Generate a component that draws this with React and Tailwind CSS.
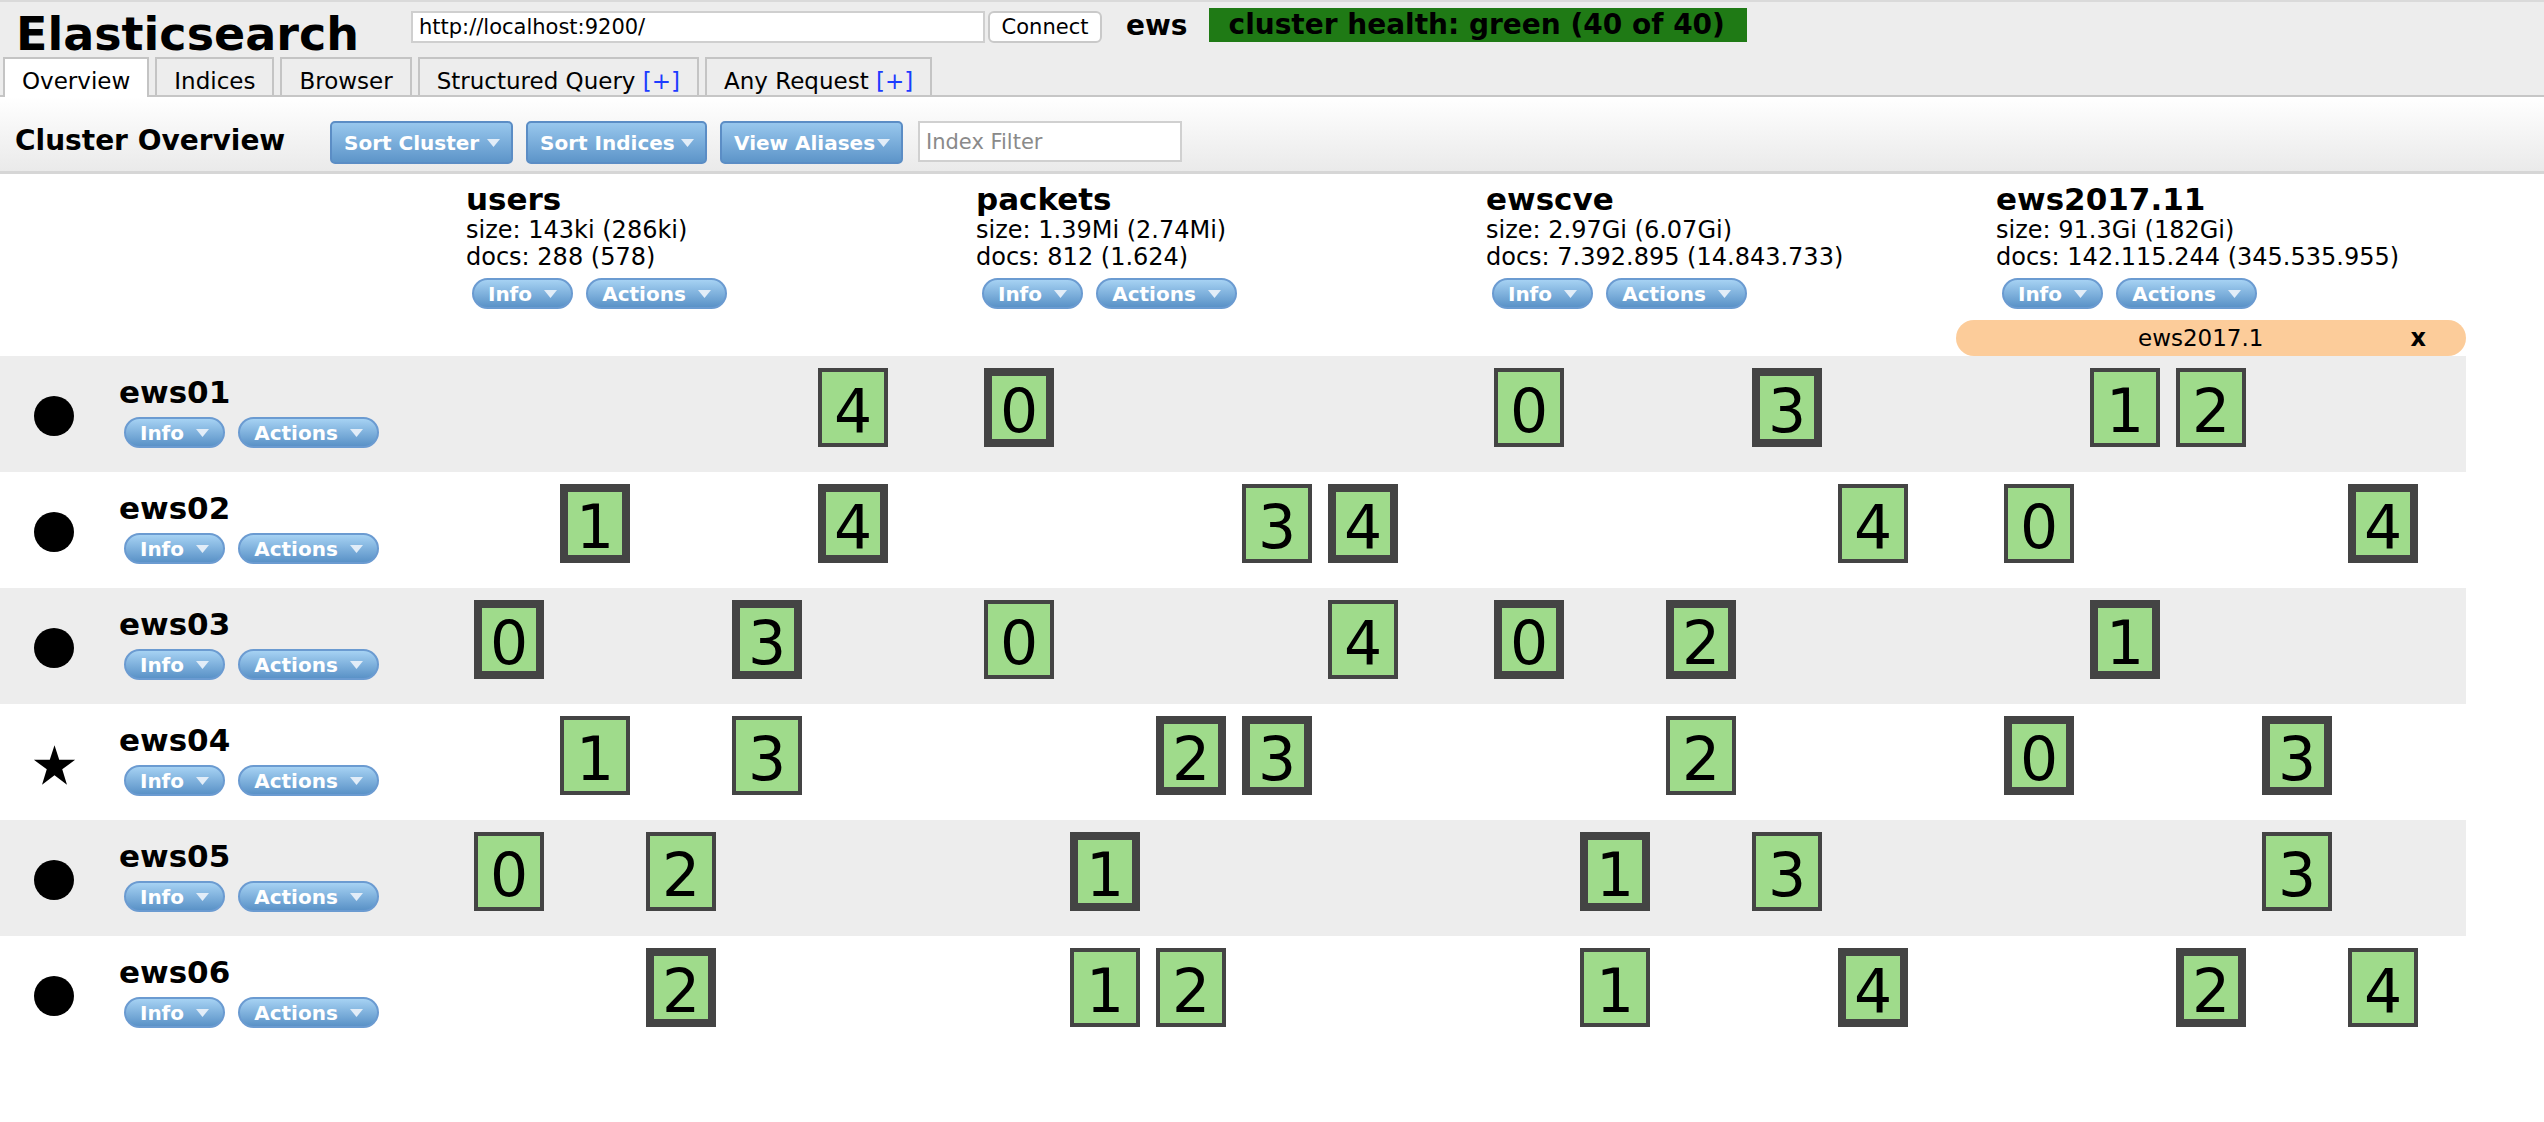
import React from "react";

const indices = [
  { name: "users", size: "143ki (286ki)", docs: "288 (578)" },
  { name: "packets", size: "1.39Mi (2.74Mi)", docs: "812 (1.624)" },
  { name: "ewscve", size: "2.97Gi (6.07Gi)", docs: "7.392.895 (14.843.733)" },
  { name: "ews2017.11", size: "91.3Gi (182Gi)", docs: "142.115.244 (345.535.955)" },
];

// per node, per index: [shard number, primary]
const nodes = [
  { name: "ews01", shards: [[[4, false]], [[0, true]], [[0, false], [3, true]], [[1, false], [2, false]]] },
  { name: "ews02", shards: [[[1, true], [4, true]], [[3, false], [4, true]], [[4, false]], [[0, false], [4, true]]] },
  { name: "ews03", shards: [[[0, true], [3, true]], [[0, false], [4, false]], [[0, true], [2, true]], [[1, true]]] },
  { name: "ews04", master: true, shards: [[[1, false], [3, false]], [[2, true], [3, true]], [[2, false]], [[0, true], [3, true]]] },
  { name: "ews05", shards: [[[0, false], [2, false]], [[1, true]], [[1, true], [3, false]], [[3, false]]] },
  { name: "ews06", shards: [[[2, true]], [[1, false], [2, false]], [[1, false], [4, true]], [[2, true], [4, false]]] },
];

const Caret = () => (
  <svg width="13" height="8" viewBox="0 0 13 8" className="shrink-0">
    <path d="M0 0h13L6.5 8z" fill="#e2edf8" />
  </svg>
);

const Pill = ({ label, width }) => (
  <button
    className={`flex items-center justify-center gap-[12px] h-[31px] rounded-full border-2 border-[#6b9bd1] bg-gradient-to-b from-[#a6d2f3] to-[#5a92c7] text-white font-bold text-[20px] leading-none whitespace-nowrap ${width}`}
  >
    <span>{label}</span>
    <Caret />
  </button>
);

const ToolButton = ({ label, width }) => (
  <button
    className={`flex items-center justify-between pl-[12px] pr-[11px] h-[43px] rounded-[5px] border-2 border-[#5b8dc5] bg-gradient-to-b from-[#98c7ed] to-[#5d95c9] text-white font-bold text-[20px] leading-none whitespace-nowrap ${width}`}
  >
    <span>{label}</span>
    <Caret />
  </button>
);

const Shard = ({ n, primary }) => (
  <div
    className={`w-[70px] h-[79px] pt-[6px] flex items-center justify-center bg-[#9fdb8b] border-[#444] text-black text-[60px] leading-none ${
      primary ? "border-[8px]" : "border-4"
    }`}
  >
    {n}
  </div>
);

const Star = () => (
  <svg width="43" height="42" viewBox="0 0 100 96">
    <polygon points="50,2 61,36 98,36 68,58 79,94 50,72 21,94 32,58 2,36 39,36" fill="#000" />
  </svg>
);

export default function App() {
  return (
    <div className="min-h-screen bg-white text-black font-['DejaVu_Sans',Verdana,sans-serif]">
      {/* Header */}
      <div className="bg-[#ededed] border-t-2 border-[#dadada]">
        <div className="flex items-start h-[55px]">
          <div className="w-[411px] pl-[16px] pt-[9px]">
            <h1 className="text-[46px] font-bold leading-[46px]">Elasticsearch</h1>
          </div>
          <input
            className="mt-[9px] w-[574px] h-[32px] bg-white border-2 border-[#cfcfcf] px-[6px] text-[21px] outline-none"
            defaultValue="http://localhost:9200/"
          />
          <button className="mt-[9px] ml-[3px] w-[114px] h-[32px] bg-white border-2 border-[#c9c9c9] rounded-[6px] text-[21px] leading-none">
            Connect
          </button>
          <span className="mt-[10px] ml-[24px] text-[28px] font-bold leading-[28px]">ews</span>
          <div className="mt-[6px] ml-[21px] h-[34px] pl-[20px] pr-[22px] bg-[#1f7a15] text-[28px] font-bold leading-[34px]">
            cluster health: green (40 of 40)
          </div>
        </div>

        {/* Tabs */}
        <div className="flex items-end gap-[6px] pl-[3px] h-[40px] border-b-2 border-[#c6c6c6]">
          {["Overview", "Indices", "Browser", "Structured Query", "Any Request"].map((t, i) => (
            <div
              key={t}
              className={`pt-[8px] px-[17px] border-2 border-b-0 border-[#c4c4c4] text-[23px] leading-[28px] whitespace-nowrap ${
                i === 0 ? "bg-white pb-[2px] -mb-[2px]" : "bg-[#ededed]"
              }`}
            >
              {t}
              {i > 2 && <span className="text-[#1d3cff]"> [+]</span>}
            </div>
          ))}
        </div>
      </div>

      {/* Toolbar */}
      <div className="flex items-start h-[77px] pt-[24px] bg-gradient-to-b from-white to-[#eaeaea] border-b-[3px] border-[#d6d6d6]">
        <div className="w-[330px] pl-[15px] pt-[2px]">
          <h2 className="text-[28px] font-bold leading-[36px]">Cluster Overview</h2>
        </div>
        <div className="flex gap-[13px]">
          <ToolButton label="Sort Cluster" width="w-[183px]" />
          <ToolButton label="Sort Indices" width="w-[181px]" />
          <ToolButton label="View Aliases" width="w-[183px]" />
          <input
            className="ml-[2px] w-[264px] h-[41px] bg-white border-2 border-[#d0d0d0] px-[6px] text-[21px] placeholder:text-[#8a8a8a] outline-none"
            placeholder="Index Filter"
          />
        </div>
      </div>

      {/* Cluster table */}
      <div className="w-[2466px]">
        {/* Index headers */}
        <div className="flex gap-[40px] pt-[7px]">
          <div className="w-[426px]" />
          {indices.map((ix) => (
            <div key={ix.name} className="w-[470px]">
              <div className="text-[31px] font-bold leading-[36px]">{ix.name}</div>
              <div className="text-[24px] leading-[27px]">size: {ix.size}</div>
              <div className="text-[24px] leading-[27px]">docs: {ix.docs}</div>
              <div className="flex gap-[13px] ml-[6px] mt-[7px]">
                <Pill label="Info" width="w-[101px]" />
                <Pill label="Actions" width="w-[141px]" />
              </div>
            </div>
          ))}
        </div>

        {/* Alias row */}
        <div className="flex mt-[11px]">
          <div className="w-[1956px]" />
          <div className="flex items-center w-[510px] h-[36px] rounded-full bg-[#fccc9a] pl-[182px] pr-[40px] text-[23px] leading-none">
            <span className="flex-1">ews2017.1</span>
            <span className="font-bold text-[24px]">x</span>
          </div>
        </div>

        {/* Node rows */}
        {nodes.map((node, r) => (
          <div key={node.name} className={`flex gap-[40px] h-[116px] ${r % 2 === 0 ? "bg-[#ededed]" : "bg-white"}`}>
            <div className="w-[426px] flex items-start">
              <div className="w-[119px] pl-[33px] pt-[40px]">
                {node.master ? <Star /> : <div className="ml-[1px] w-[40px] h-[40px] rounded-full bg-black" />}
              </div>
              <div className="pt-[18px]">
                <div className="text-[31px] font-bold leading-[36px]">{node.name}</div>
                <div className="flex gap-[13px] ml-[5px] mt-[7px]">
                  <Pill label="Info" width="w-[101px]" />
                  <Pill label="Actions" width="w-[141px]" />
                </div>
              </div>
            </div>
            {node.shards.map((list, c) => (
              <div key={c} className="w-[470px] flex gap-[16px] pl-[8px] pt-[12px]">
                {[0, 1, 2, 3, 4].map((k) => {
                  const s = list.find((x) => x[0] === k);
                  return s ? <Shard key={k} n={k} primary={s[1]} /> : <div key={k} className="w-[70px]" />;
                })}
              </div>
            ))}
          </div>
        ))}
      </div>
    </div>
  );
}
